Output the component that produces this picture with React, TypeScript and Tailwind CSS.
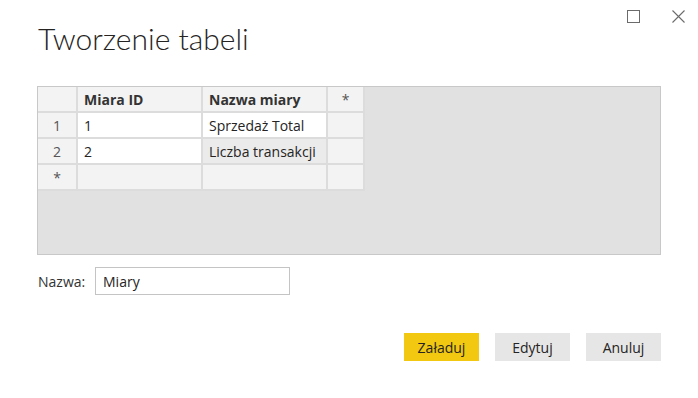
const cols = [40, 125, 125, 37];

type Cell = { text: string; kind: "head" | "data" | "sel" | "rowhead"; bold?: boolean; center?: boolean };

const rows: Cell[][] = [
  [
    { text: "", kind: "head" },
    { text: "Miara ID", kind: "head", bold: true },
    { text: "Nazwa miary", kind: "head", bold: true },
    { text: "*", kind: "head", center: true },
  ],
  [
    { text: "1", kind: "rowhead", center: true },
    { text: "1", kind: "data" },
    { text: "Sprzedaż Total", kind: "data" },
    { text: "", kind: "head" },
  ],
  [
    { text: "2", kind: "rowhead", center: true },
    { text: "2", kind: "data" },
    { text: "Liczba transakcji", kind: "sel" },
    { text: "", kind: "head" },
  ],
  [
    { text: "*", kind: "rowhead", center: true },
    { text: "", kind: "head" },
    { text: "", kind: "head" },
    { text: "", kind: "head" },
  ],
];

const bgFor = {
  head: "bg-[#f3f3f3]",
  rowhead: "bg-[#f3f3f3]",
  data: "bg-white",
  sel: "bg-[#ebebeb]",
};

export default function App() {
  return (
    <div className="w-[698px] h-[398px] bg-white flex flex-col font-['Open_Sans',sans-serif] text-[#252423]">
      {/* window controls */}
      <div className="flex justify-end items-start gap-[32px] pt-[10px] pr-[13px] h-[24px] shrink-0">
        <div className="w-[13px] h-[13px] border border-[#6b6b6b]" />
        <svg width="13" height="13" viewBox="0 0 13 13" className="text-[#6b6b6b]">
          <path d="M0.5 0.5 L12.5 12.5 M12.5 0.5 L0.5 12.5" stroke="currentColor" strokeWidth="1.1" fill="none" />
        </svg>
      </div>

      <div className="px-[37px] flex flex-col">
        <h1 className="font-['Lato',sans-serif] font-light text-[30px] leading-[36px] text-[#252423] ml-[1px] mt-[-4px]">
          Tworzenie tabeli
        </h1>

        {/* data grid */}
        <div className="mt-[30px] w-[624px] h-[169px] border border-[#c8c8c8] bg-[#e1e1e1]">
          {rows.map((row, ri) => (
            <div key={ri} className="flex">
              {row.map((c, ci) => (
                <div
                  key={ci}
                  style={{ width: cols[ci] }}
                  className={`h-[26px] border-r-2 border-b-2 border-[#dcdcdc] flex items-center text-[14px] ${bgFor[c.kind]} ${
                    c.center ? "justify-center" : "px-[6px]"
                  } ${c.bold ? "font-bold text-[#333]" : ""} ${c.kind === "rowhead" ? "text-[#555]" : ""} ${
                    c.text === "*" ? "text-[12px] text-[#555]" : ""
                  }`}
                >
                  {c.text}
                </div>
              ))}
            </div>
          ))}
        </div>

        {/* name */}
        <div className="flex items-center mt-[12px] ml-[1px]">
          <span className="text-[14px] text-[#333] w-[57px]">Nazwa:</span>
          <div className="w-[195px] h-[28px] border border-[#c4c4c4] flex items-center px-[7px] text-[14px] text-[#252423]">
            Miary
          </div>
        </div>

        {/* buttons */}
        <div className="flex justify-end gap-[16px] mt-[38px] w-[624px]">
          <button className="w-[75px] h-[28px] bg-[#f2c811] text-[14px] text-[#252423]">Załaduj</button>
          <button className="w-[75px] h-[28px] bg-[#e6e6e6] text-[14px] text-[#252423]">Edytuj</button>
          <button className="w-[75px] h-[28px] bg-[#e6e6e6] text-[14px] text-[#252423]">Anuluj</button>
        </div>
      </div>
    </div>
  );
}
